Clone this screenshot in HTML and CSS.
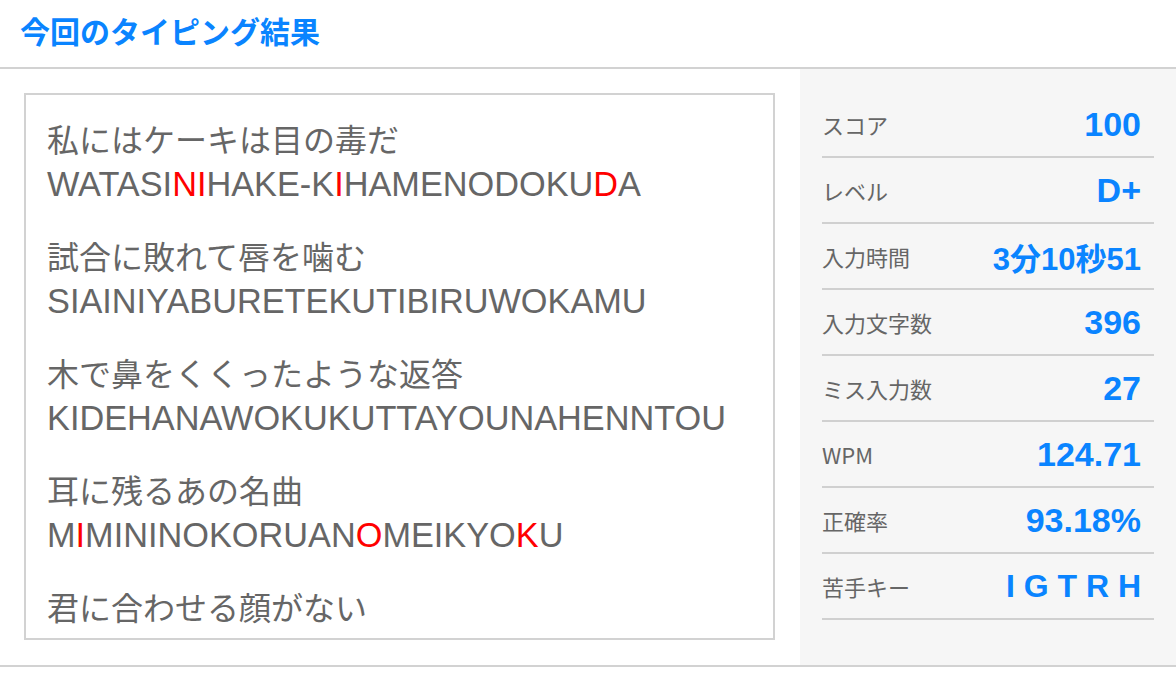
FILE: index.html
```html
<!DOCTYPE html>
<html lang="ja">
<head>
<meta charset="utf-8">
<title>今回のタイピング結果</title>
<link rel="stylesheet" href="styles.css">
</head>
<body>
<header class="header">
  <h1 class="title">今回のタイピング結果</h1>
</header>
<main class="main">
  <section class="left">
    <div class="log">
      <div class="pair">
        <div class="jp">私にはケーキは目の毒だ</div>
        <div class="ro">WATASI<span class="miss">NI</span>HAKE-K<span class="miss">I</span>HAMENODOKU<span class="miss">D</span>A</div>
      </div>
      <div class="pair">
        <div class="jp">試合に敗れて唇を噛む</div>
        <div class="ro">SIAINIYABURETEKUTIBIRUWOKAMU</div>
      </div>
      <div class="pair">
        <div class="jp">木で鼻をくくったような返答</div>
        <div class="ro">KIDEHANAWOKUKUTTAYOUNAHENNTOU</div>
      </div>
      <div class="pair">
        <div class="jp">耳に残るあの名曲</div>
        <div class="ro">M<span class="miss">I</span>MININOKORUAN<span class="miss">O</span>MEIKYO<span class="miss">K</span>U</div>
      </div>
      <div class="pair">
        <div class="jp">君に合わせる顔がない</div>
      </div>
    </div>
  </section>
  <aside class="stats">
    <div class="row"><span class="label">スコア</span><span class="value">100</span></div>
    <div class="row"><span class="label">レベル</span><span class="value">D+</span></div>
    <div class="row"><span class="label">入力時間</span><span class="value value-time">3分10秒51</span></div>
    <div class="row"><span class="label">入力文字数</span><span class="value">396</span></div>
    <div class="row"><span class="label">ミス入力数</span><span class="value">27</span></div>
    <div class="row"><span class="label">WPM</span><span class="value">124.71</span></div>
    <div class="row"><span class="label">正確率</span><span class="value">93.18%</span></div>
    <div class="row"><span class="label">苦手キー</span><span class="value value-keys">I G T R H</span></div>
  </aside>
</main>
</body>
</html>
```
FILE: styles.css
```css
* { box-sizing: border-box; }
html, body {
  margin: 0;
  padding: 0;
  background: #ffffff;
  font-family: "Liberation Sans", "Noto Sans CJK JP", sans-serif;
}
.header {
  height: 69px;
  border-bottom: 2px solid #d2d2d2;
  display: flex;
  align-items: center;
  padding: 0 0 7px 20px;
}
.title {
  margin: 0;
  font-family: "Noto Sans CJK JP", sans-serif;
  font-size: 30px;
  font-weight: 700;
  color: #0a84ff;
  line-height: 1;
}
.main {
  display: flex;
  height: 598px;
  border-bottom: 2px solid #d2d2d2;
}
.left {
  width: 800px;
  padding: 24px 25px 25px 24px;
}
.log {
  height: 547px;
  border: 2px solid #d2d2d2;
  padding: 20px 20px 0 21px;
  overflow: hidden;
  color: #666666;
}
.pair {
  margin-bottom: 25px;
}
.jp {
  font-family: "Noto Sans CJK JP", sans-serif;
  font-size: 32px;
  line-height: 46px;
  white-space: nowrap;
}
.ro {
  font-family: "Liberation Sans", Arial, sans-serif;
  font-size: 34.3px;
  line-height: 46px;
  white-space: nowrap;
}
.miss { color: #ff0000; }
.stats {
  width: 376px;
  background: #f6f6f6;
  padding: 23px 22px 0 22px;
}
.row {
  height: 66px;
  border-bottom: 2px solid #d0d0d0;
  display: flex;
  align-items: center;
  justify-content: space-between;
  padding: 0 13px 0 0;
}
.label {
  font-family: "Noto Sans CJK JP", sans-serif;
  font-size: 22px;
  color: #666666;
}
.value {
  font-family: "Liberation Sans", "Noto Sans CJK JP", sans-serif;
  font-size: 34px;
  font-weight: 700;
  color: #0a84ff;
}
.value-time {
  font-size: 31px;
}
.value-keys {
  font-size: 32px;
}
```
